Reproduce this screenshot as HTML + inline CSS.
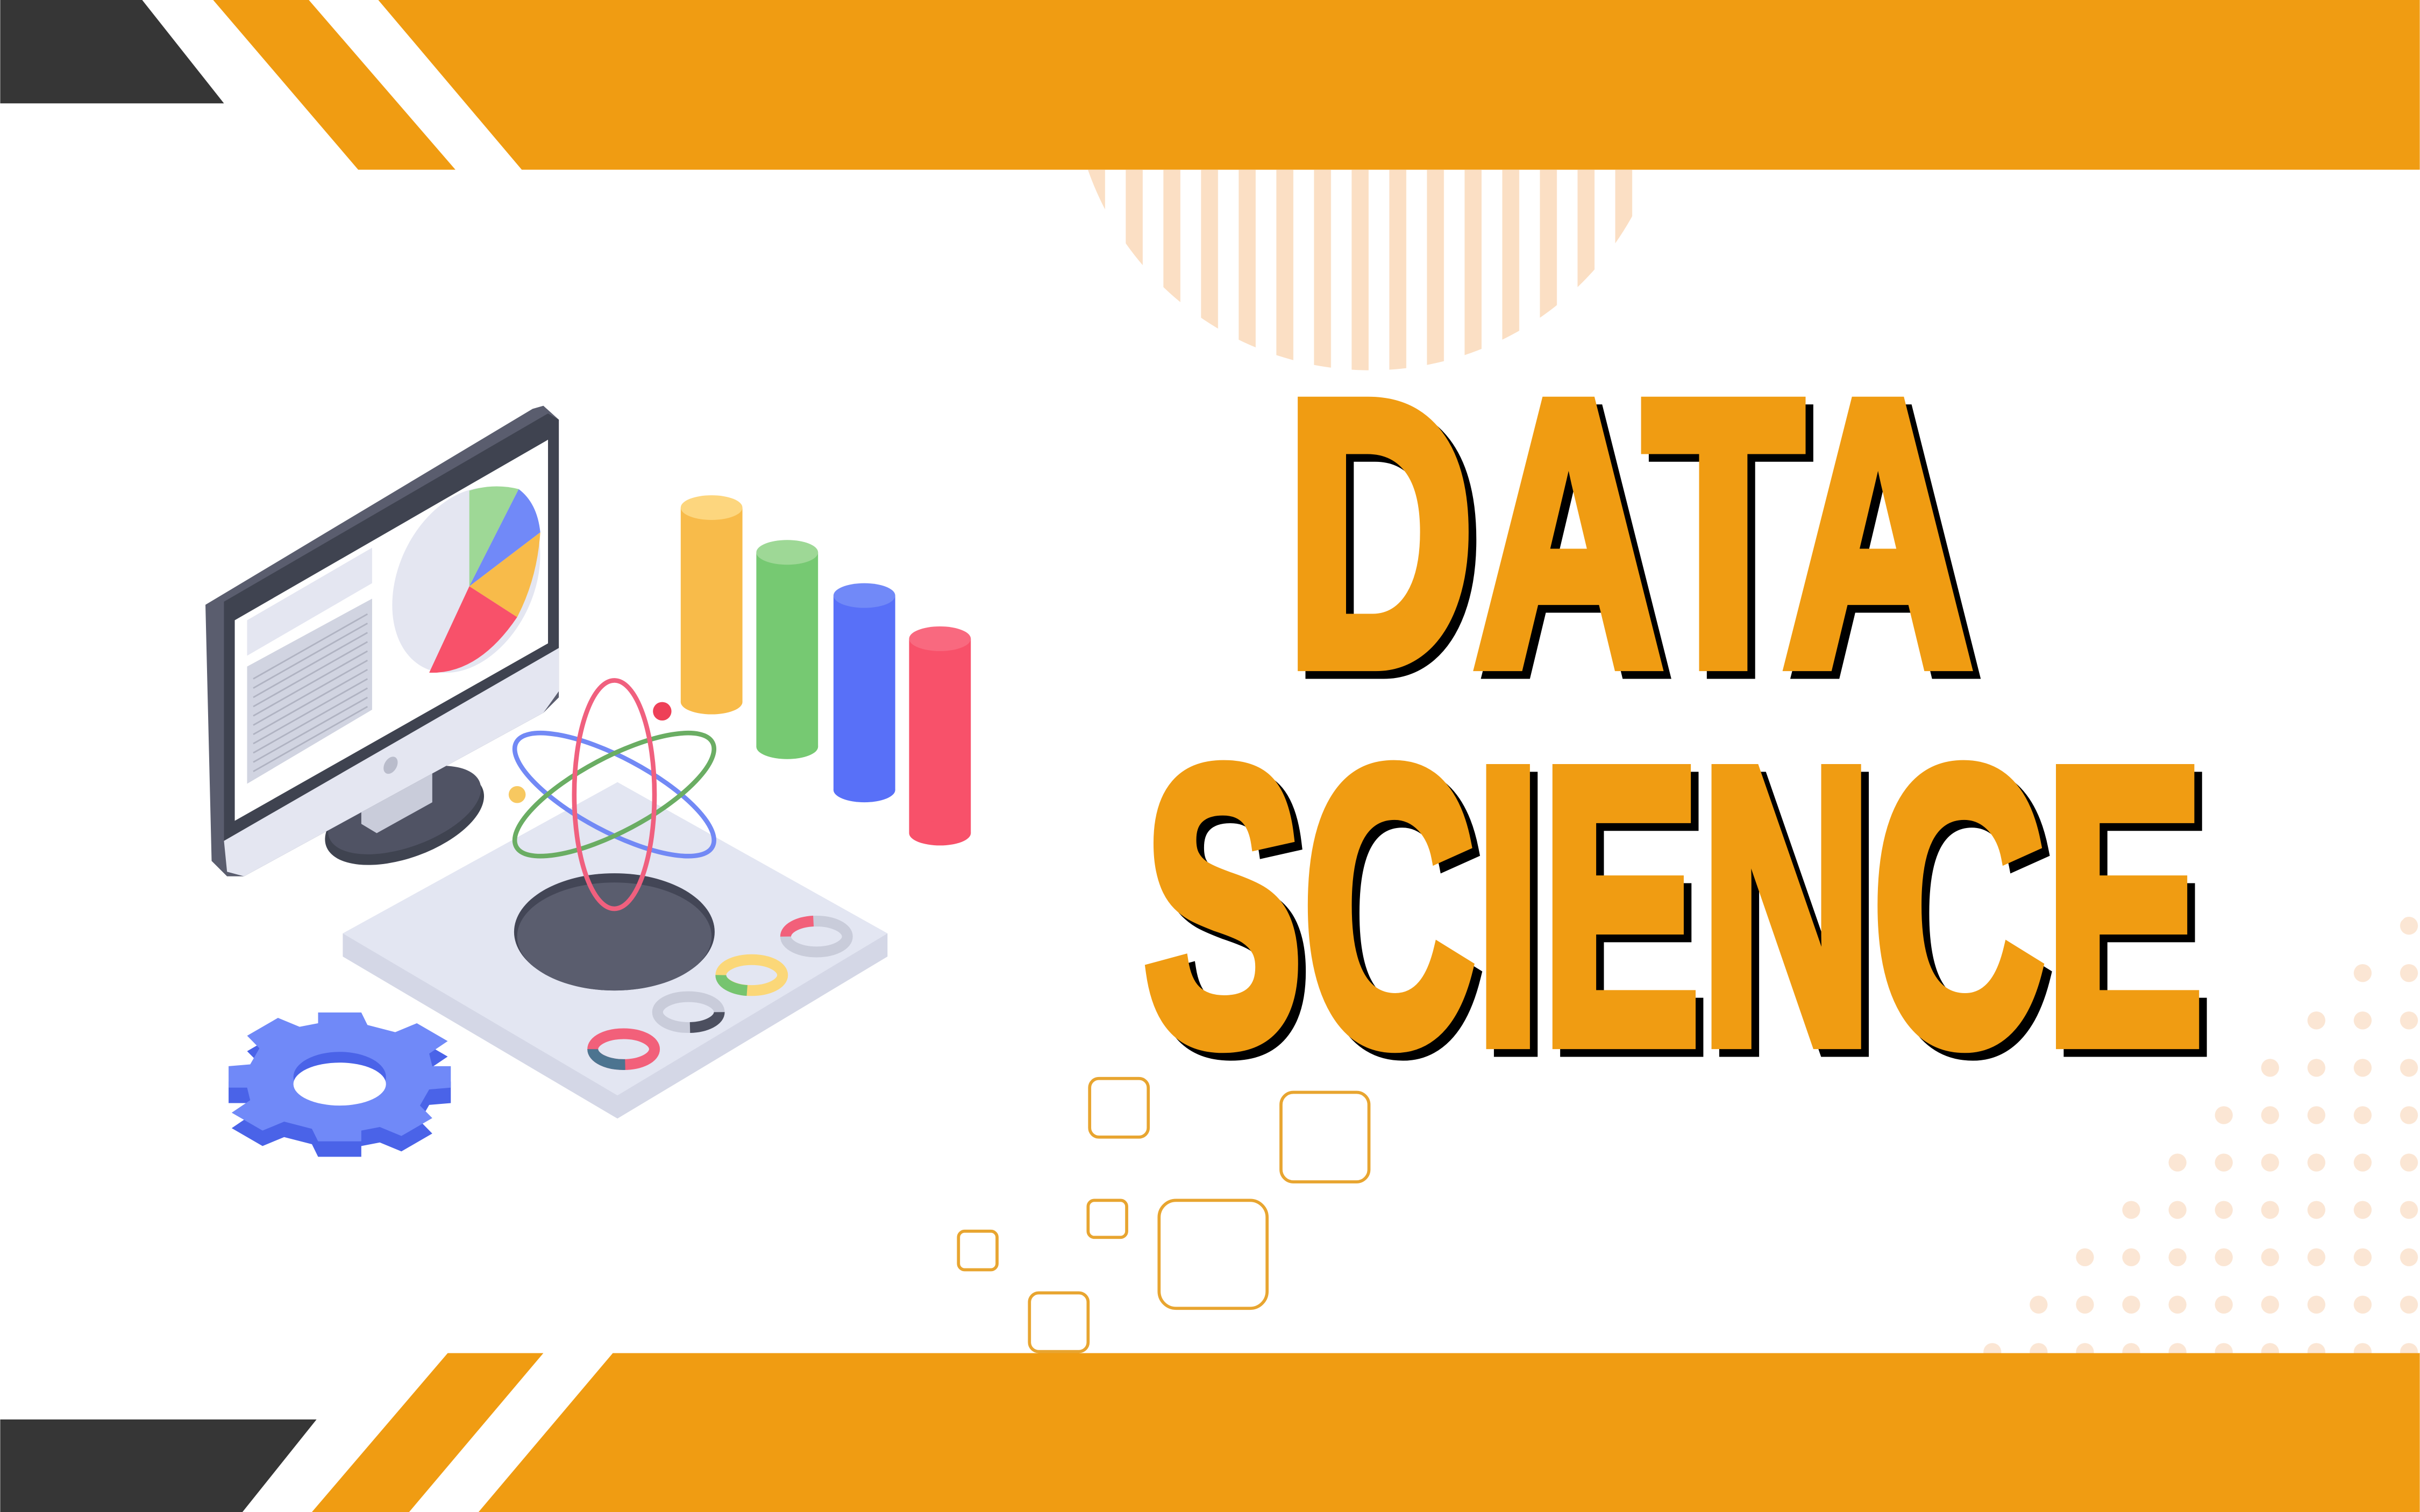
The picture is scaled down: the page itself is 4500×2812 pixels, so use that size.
<!DOCTYPE html>
<html><head><meta charset="utf-8"><style>
html,body{margin:0;padding:0;background:#fff;}
svg{display:block;}
</style></head><body>
<svg width="4500" height="2812" viewBox="0 0 1568 980" xmlns="http://www.w3.org/2000/svg">
<defs>
<pattern id="stripes" x="705" y="0" width="24.4" height="10" patternUnits="userSpaceOnUse">
<rect x="0" y="0" width="11" height="10" fill="#fbdfc4"/>
</pattern>
<clipPath id="halfc"><rect x="0" y="110" width="1568" height="200"/></clipPath>
<pattern id="dots" x="1546" y="585" width="30" height="30.7" patternUnits="userSpaceOnUse">
<circle cx="15" cy="15" r="5.8" fill="#fbe6d4"/>
</pattern>
<clipPath id="tri"><polygon points="1568,585 1568,880 1275,880"/></clipPath>
</defs>

<polygon points="0,0 92,0 145,67 0,67" fill="#363636"/>
<polygon points="138,0 200,0 295,110 232,110" fill="#f09c12"/>
<polygon points="245,0 1568,0 1568,110 338,110" fill="#f09c12"/>
<circle cx="888" cy="46" r="194" fill="url(#stripes)" clip-path="url(#halfc)"/>

<rect x="1270" y="580" width="298" height="300" fill="url(#dots)" clip-path="url(#tri)"/>

<polygon points="397,877 1568,877 1568,980 310,980" fill="#f09c12"/>
<polygon points="290,877 352,877 265,980 202,980" fill="#f09c12"/>
<polygon points="0,920 205,920 157,980 0,980" fill="#363636"/>

<g fill="none" stroke="#e8a530" stroke-width="2">
<rect x="706" y="699" width="38" height="38" rx="6"/>
<rect x="830" y="708" width="57" height="58" rx="8"/>
<rect x="705" y="778" width="25" height="24" rx="4"/>
<rect x="751" y="778" width="70" height="70" rx="11"/>
<rect x="621" y="798" width="25" height="25" rx="4"/>
<rect x="667" y="838" width="38" height="38" rx="6"/>
</g>

<g font-family="'Liberation Sans Narrow','Liberation Sans',sans-serif" font-weight="bold" stroke-width="10" stroke-linejoin="miter">
<text x="838" y="435" font-size="244" textLength="445" lengthAdjust="spacingAndGlyphs" fill="#000" stroke="#000">DATA</text>
<text x="833" y="430" font-size="244" textLength="445" lengthAdjust="spacingAndGlyphs" fill="#f09c12" stroke="#f09c12">DATA</text>
<text x="746" y="680" font-size="254" textLength="687" lengthAdjust="spacingAndGlyphs" fill="#000" stroke="#000">SCIENCE</text>
<text x="741" y="675" font-size="254" textLength="687" lengthAdjust="spacingAndGlyphs" fill="#f09c12" stroke="#f09c12">SCIENCE</text>
</g>

<polygon points="222,605 400,507 575,605 575,620 400,725 222,620" fill="#d4d7e6"/>
<polygon points="222,605 400,507 575,605 400,710" fill="#e3e6f2"/>
<ellipse cx="398" cy="604" rx="65" ry="38" fill="#434656"/>
<ellipse cx="398" cy="607" rx="63" ry="35" fill="#5a5d6e"/>
<g fill="none" stroke-width="7">
<ellipse cx="529" cy="607" rx="20" ry="10" stroke="#c9ccda"/>
<path d="M509,607 A20,10 0 0 1 527,597" stroke="#f2607a"/>
<ellipse cx="487" cy="632" rx="20" ry="10" stroke="#fbd778"/>
<path d="M467,632 A20,10 0 0 0 484,642" stroke="#76c46f"/>
<ellipse cx="446" cy="656" rx="20" ry="10" stroke="#c9ccda"/>
<path d="M466,656 A20,10 0 0 1 447,666" stroke="#4c4f5f"/>
<ellipse cx="404" cy="680" rx="20" ry="10" stroke="#f2607a"/>
<path d="M384,680 A20,10 0 0 0 405,690" stroke="#4c7490"/>
</g>

<g fill="none" stroke-width="3">
<ellipse cx="398" cy="515" rx="72" ry="24" transform="rotate(28 398 515)" stroke="#7289f5"/>
<ellipse cx="398" cy="515" rx="72" ry="24" transform="rotate(-28 398 515)" stroke="#6aad63"/>
<ellipse cx="398" cy="515" rx="26" ry="74" stroke="#f0607e"/>
</g>
<circle cx="429" cy="461" r="6" fill="#ee4057"/>
<circle cx="335" cy="515" r="5.5" fill="#f7c860"/>

<g>
<rect x="441" y="329" width="40" height="126" fill="#f8bb4a"/><ellipse cx="461" cy="455" rx="20" ry="8" fill="#f8bb4a"/><ellipse cx="461" cy="329" rx="20" ry="8" fill="#fdd67e"/>
<rect x="490" y="358" width="40" height="126" fill="#76c972"/><ellipse cx="510" cy="484" rx="20" ry="8" fill="#76c972"/><ellipse cx="510" cy="358" rx="20" ry="8" fill="#9ed896"/>
<rect x="540" y="386" width="40" height="126" fill="#5870f8"/><ellipse cx="560" cy="512" rx="20" ry="8" fill="#5870f8"/><ellipse cx="560" cy="386" rx="20" ry="8" fill="#7189f8"/>
<rect x="589" y="414" width="40" height="126" fill="#f8516a"/><ellipse cx="609" cy="540" rx="20" ry="8" fill="#f8516a"/><ellipse cx="609" cy="414" rx="20" ry="8" fill="#f9697f"/>
</g>

<ellipse cx="262" cy="530" rx="54" ry="26" transform="rotate(-20 262 530)" fill="#3f4350"/>
<ellipse cx="262" cy="525" rx="52" ry="24" transform="rotate(-20 262 525)" fill="#505364"/>
<polygon points="234,515 280,490 280,520 244,540 234,534" fill="#c9ccda"/>
<polygon points="133,392 345,265 352,263 362,272 362,452 352,462 158,568 147,568 137,558" fill="#5a5d6e"/>
<polygon points="145,390 355,268 362,272 362,420 145,545" fill="#3f4350"/>
<polygon points="145,545 362,420 362,448 352,462 158,568 147,565" fill="#e4e6f1"/>
<polygon points="152,402 355,285 355,417 152,532" fill="#ffffff"/>
<ellipse cx="253" cy="496" rx="4" ry="6" transform="rotate(30 253 496)" fill="#b9bccb"/>
<polygon points="160,402 241,355 241,378 160,425" fill="#e4e6f1"/>
<polygon points="160,432 241,388 241,460 160,508" fill="#d1d4e1"/>
<g stroke="#b0b3c2" stroke-width="1">
<line x1="164" y1="440" x2="238" y2="398"/><line x1="164" y1="446" x2="238" y2="404"/><line x1="164" y1="452" x2="238" y2="410"/><line x1="164" y1="458" x2="238" y2="416"/><line x1="164" y1="464" x2="238" y2="422"/><line x1="164" y1="470" x2="238" y2="428"/><line x1="164" y1="476" x2="238" y2="434"/><line x1="164" y1="482" x2="238" y2="440"/><line x1="164" y1="488" x2="238" y2="446"/><line x1="164" y1="494" x2="238" y2="452"/><line x1="164" y1="500" x2="238" y2="458"/>
</g>
<ellipse cx="302" cy="376" rx="44" ry="63" transform="rotate(25 302 376)" fill="#e4e6f1"/>
<path d="M304,380 L304,318 Q320,313 336,317 Z" fill="#9ed896"/>
<path d="M304,380 L336,317 Q348,326 350,345 Z" fill="#7189f8"/>
<path d="M304,380 L350,345 Q348,375 335,400 Z" fill="#f8bb4a"/>
<path d="M304,380 L335,400 Q310,437 278,436 Z" fill="#f8516a"/>

<g transform="translate(220,708) scale(1,0.58)">
<path fill="#4a63e8" d="M-14,-72 L14,-72 L18,-58 L36,-50 L50,-60 L70,-40 L58,-26 L60,-12 L72,-12 L72,12 L58,14 L52,32 L60,46 L40,66 L26,56 L14,60 L14,72 L-14,72 L-18,58 L-36,50 L-50,60 L-70,40 L-58,26 L-60,12 L-72,12 L-72,-12 L-58,-14 L-52,-32 L-60,-46 L-40,-66 L-26,-56 L-14,-60 Z"/>
</g>
<g transform="translate(220,698) scale(1,0.58)">
<path fill="#7089f8" d="M-14,-72 L14,-72 L18,-58 L36,-50 L50,-60 L70,-40 L58,-26 L60,-12 L72,-12 L72,12 L58,14 L52,32 L60,46 L40,66 L26,56 L14,60 L14,72 L-14,72 L-18,58 L-36,50 L-50,60 L-70,40 L-58,26 L-60,12 L-72,12 L-72,-12 L-58,-14 L-52,-32 L-60,-46 L-40,-66 L-26,-56 L-14,-60 Z"/>
<ellipse cx="0" cy="0" rx="30" ry="28" fill="#4a63e8"/>
<ellipse cx="0" cy="8" rx="30" ry="24" fill="#ffffff"/>
</g>
</svg>
</body></html>
